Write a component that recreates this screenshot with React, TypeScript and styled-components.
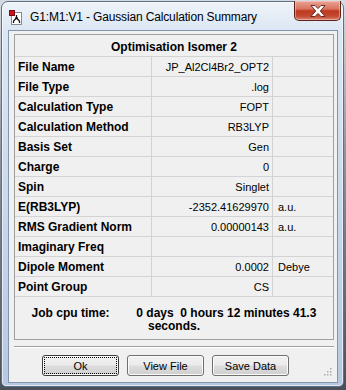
import React from 'react';
import styled, { createGlobalStyle } from 'styled-components';

interface SummaryRow {
	label: string;
	value: string;
	unit?: string;
}

const rows: SummaryRow[] = [
	{ label: 'File Name', value: 'JP_Al2Cl4Br2_OPT2' },
	{ label: 'File Type', value: '.log' },
	{ label: 'Calculation Type', value: 'FOPT' },
	{ label: 'Calculation Method', value: 'RB3LYP' },
	{ label: 'Basis Set', value: 'Gen' },
	{ label: 'Charge', value: '0' },
	{ label: 'Spin', value: 'Singlet' },
	{ label: 'E(RB3LYP)', value: '-2352.41629970', unit: 'a.u.' },
	{ label: 'RMS Gradient Norm', value: '0.00000143', unit: 'a.u.' },
	{ label: 'Imaginary Freq', value: '' },
	{ label: 'Dipole Moment', value: '0.0002', unit: 'Debye' },
	{ label: 'Point Group', value: 'CS' },
];

const GlobalStyle = createGlobalStyle`
	html, body {
		margin: 0;
		padding: 0;
	}
	body {
		width: 346px;
		height: 390px;
		overflow: hidden;
		background: linear-gradient(180deg, #d6dbe2 0%, #8a939e 40%, #4a5059 100%);
		font-family: "Liberation Sans", Arial, sans-serif;
		color: #000;
	}
`;

const Window = styled.div`
	box-sizing: border-box;
	width: 343px;
	height: 386px;
	margin: 1px 2px 0 1px;
	padding: 0 5px 3px 6px;
	border: 1px solid #5f6f86;
	border-radius: 7px 7px 5px 5px;
	background: linear-gradient(180deg, #eef3f9 0px, #dce7f3 28px, #c6d6ea 60%, #b6c8e1 100%);
	box-shadow: inset 0 0 0 1px rgba(255, 255, 255, 0.6);
	display: flex;
	flex-direction: column;
`;

const TitleBar = styled.div`
	height: 27px;
	margin-top: 1px;
	display: flex;
	align-items: center;
`;

const AppIcon = styled.svg`
	width: 16px;
	height: 16px;
	margin-left: 1px;
	flex-shrink: 0;
`;

const Title = styled.div`
	margin-left: 5px;
	font-size: 12px;
	letter-spacing: -0.15px;
	color: #000;
	white-space: nowrap;
	flex: 1;
`;

const CloseButton = styled.div`
	align-self: flex-start;
	width: 47px;
	height: 20px;
	margin: -2px -3px 0 0;
	box-sizing: border-box;
	border: 1px solid #5e2219;
	border-top: none;
	border-radius: 0 0 5px 5px;
	background: linear-gradient(180deg, #eaa496 0%, #d9735f 42%, #c0391f 52%, #c24a31 80%, #dc8670 100%);
	box-shadow: inset 0 0 0 1px rgba(255, 220, 210, 0.45);
	display: flex;
	align-items: center;
	justify-content: center;
`;

const Client = styled.div`
	flex: 1;
	position: relative;
	border: 1px solid #8494ad;
	background: #f0f0f0;
	padding: 3px 3px 0 5px;
	display: flex;
	flex-direction: column;
`;

const Table = styled.div`
	display: grid;
	grid-template-columns: 137px 121px 60px;
	border: 1px solid #a0a0a0;
`;

const HeaderCell = styled.div`
	grid-column: 1 / -1;
	height: 18px;
	padding-top: 3px;
	line-height: 18px;
	border-bottom: 1px solid #d3d3d3;
	text-align: center;
	font-weight: bold;
	font-size: 12px;
`;

const Cell = styled.div<{ $kind: 'label' | 'value' | 'unit' }>`
	height: 18px;
	padding-top: 1px;
	line-height: 19px;
	border-bottom: 1px solid #d3d3d3;
	border-right: ${(p) => (p.$kind === 'unit' ? 'none' : '1px solid #d3d3d3')};
	font-size: ${(p) => (p.$kind === 'label' ? '12px' : '11px')};
	font-weight: ${(p) => (p.$kind === 'label' ? 'bold' : 'normal')};
	text-align: ${(p) => (p.$kind === 'value' ? 'right' : 'left')};
	padding-left: ${(p) => (p.$kind === 'label' ? '3px' : p.$kind === 'unit' ? '5px' : '0')};
	padding-right: ${(p) => (p.$kind === 'value' ? '3px' : '0')};
	white-space: nowrap;
	overflow: hidden;
`;

const JobCell = styled.div`
	grid-column: 1 / -1;
	box-sizing: border-box;
	height: 42px;
	padding-top: 10px;
	text-align: center;
	font-weight: bold;
	font-size: 12px;
	line-height: 13px;
`;

const JobLine = styled.span`
	white-space: pre;
`;

const Separator = styled.div`
	height: 1px;
	margin-top: 6px;
	background: #a0a0a0;
	border-bottom: 1px solid #ffffff;
`;

const ButtonRow = styled.div`
	display: flex;
	gap: 8px;
	margin-top: 7px;
	padding-left: 28px;
`;

const Button = styled.div<{ $default?: boolean }>`
	box-sizing: border-box;
	width: 77px;
	height: 21px;
	border: 1px solid ${(p) => (p.$default ? '#3c3c3c' : '#707070')};
	border-radius: 3px;
	background: linear-gradient(180deg, #f2f2f2 0%, #ebebeb 48%, #dddddd 52%, #cfcfcf 100%);
	box-shadow: inset 0 0 0 1px #fbfbfb;
	outline: ${(p) => (p.$default ? '1px dotted #000' : 'none')};
	outline-offset: -3px;
	display: flex;
	align-items: center;
	justify-content: center;
	font-size: 11px;
	color: #000;
`;

const SizeGrip = styled.svg`
	position: absolute;
	right: 5px;
	bottom: 6px;
	width: 9px;
	height: 9px;
`;

const GaussianIcon = () => (
	<AppIcon viewBox="0 0 16 16">
		<rect x="2.5" y="3.5" width="10" height="12" fill="#ffffff" stroke="#8a8a8a" />
		<rect x="0" y="1" width="6" height="6" fill="#c8141e" />
		<rect x="0.5" y="1.5" width="5" height="5" fill="none" stroke="#7a0a10" />
		<path d="M7.5 6 L7.5 9 M7.5 9 L4.5 12 M7.5 9 L10.5 12 M4.5 12 L4.5 14 M10.5 12 L10.5 14" stroke="#111" strokeWidth="1.3" fill="none" />
		<circle cx="7.5" cy="9" r="1.2" fill="#111" />
	</AppIcon>
);

const CloseGlyph = () => (
	<svg width="16" height="12" viewBox="0 0 16 12">
		<path
			d="M1 0.5 H5 L8 3.6 L11 0.5 H15 L10.3 6 L15 11.5 H11 L8 8.4 L5 11.5 H1 L5.7 6 Z"
			fill="#ffffff"
			stroke="#5a2018"
			strokeWidth="0.9"
			strokeLinejoin="round"
		/>
	</svg>
);

const App = () => {
	return (
		<>
			<GlobalStyle />
			<Window>
				<TitleBar>
					<GaussianIcon />
					<Title>G1:M1:V1 - Gaussian Calculation Summary</Title>
					<CloseButton>
						<CloseGlyph />
					</CloseButton>
				</TitleBar>
				<Client>
					<Table>
						<HeaderCell>Optimisation Isomer 2</HeaderCell>
						{rows.map((row) => (
							<React.Fragment key={row.label}>
								<Cell $kind="label">{row.label}</Cell>
								<Cell $kind="value">{row.value}</Cell>
								<Cell $kind="unit">{row.unit}</Cell>
							</React.Fragment>
						))}
						<JobCell>
							<JobLine>{'Job cpu time:        0 days  0 hours 12 minutes 41.3'}</JobLine>
							<br />
							seconds.
						</JobCell>
					</Table>
					<Separator />
					<ButtonRow>
						<Button $default>Ok</Button>
						<Button>View File</Button>
						<Button>Save Data</Button>
					</ButtonRow>
					<SizeGrip viewBox="0 0 9 9">
						<g fill="#a8a8a8">
							<rect x="7" y="1" width="1.5" height="1.5" />
							<rect x="4" y="4" width="1.5" height="1.5" />
							<rect x="7" y="4" width="1.5" height="1.5" />
							<rect x="1" y="7" width="1.5" height="1.5" />
							<rect x="4" y="7" width="1.5" height="1.5" />
							<rect x="7" y="7" width="1.5" height="1.5" />
						</g>
					</SizeGrip>
				</Client>
			</Window>
		</>
	);
};

export default App;
